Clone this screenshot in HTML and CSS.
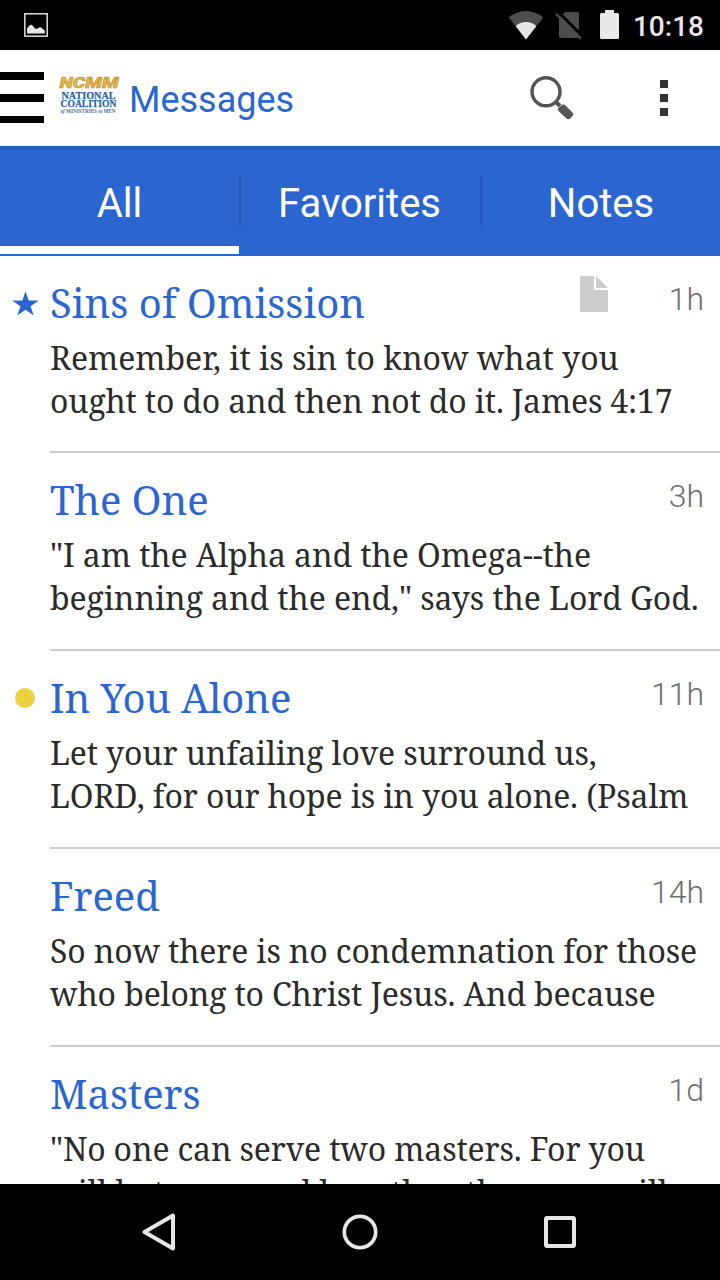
FILE: index.html
```
<!DOCTYPE html>
<html lang="en">
<head>
<meta charset="utf-8">
<title>Messages</title>
<link rel="stylesheet" href="styles.css">
</head>
<body>
<div class="screen">
  <div class="status">
    <svg class="status-pic" width="24" height="24" viewBox="0 0 24 24"><rect x=".8" y=".8" width="22.4" height="22.4" fill="none" stroke="#dcdcdc" stroke-width="1.5"/><path d="M3 20.500V15.500L5.500 12.600Q7.300 10.600 9 13L11.300 15.800H13L15 14.600Q16.500 13.600 18 15.200L20.800 17.400V20.500z" fill="#e6e6e6"/></svg>
    <div class="status-right">
      <svg width="36" height="30" viewBox="0 0 36 30"><path d="M18 29.500L.8 7.500Q8 1 18 1T35.200 7.500z" fill="#4d4d4d"/><path d="M18 29.500L7.800 16.200Q12 12 18 12T28.200 16.200z" fill="#e6e6e6"/></svg>
      <svg width="27" height="30" viewBox="0 0 27 30"><path d="M4 8L10.200 2H22Q24 2 24 4V26Q24 28 22 28H6Q4 28 4 26z" fill="#4d4d4d"/><path d="M2.500 1.200L27.500 26.200" stroke="#000" stroke-width="3"/><path d="M1 3.800L25.800 28.800" stroke="#4d4d4d" stroke-width="2.400"/></svg>
      <svg width="19" height="30" viewBox="0 0 19 30"><path d="M5 0H14V3H17.500Q19 3 19 4.500V27.500Q19 29 17.500 29H1.500Q0 29 0 27.500V4.500Q0 3 1.500 3H5z" fill="#e9e9e9"/></svg>
      <span class="clock">10:18</span>
    </div>
  </div>
  <header class="bar">
    <div class="burger"><i></i><i></i><i></i></div>
    <svg class="logo" width="62" height="40" viewBox="0 0 62 40">
      <text class="logo-top" x="1.500" y="11.500" textLength="59" lengthAdjust="spacingAndGlyphs">NCMM</text>
      <text class="logo-mid" x="3.500" y="22.500" textLength="54" lengthAdjust="spacingAndGlyphs">NATIONAL</text>
      <text class="logo-mid" x="2.500" y="31" textLength="56" lengthAdjust="spacingAndGlyphs">COALITION</text>
      <text class="logo-low" x="2.500" y="37" textLength="55" lengthAdjust="spacingAndGlyphs"><tspan font-style="italic">of</tspan> MINISTRIES <tspan font-style="italic">to</tspan> MEN</text>
    </svg>
    <h1>Messages</h1>
    <svg class="search" width="44" height="44" viewBox="0 0 44 44"><circle cx="16" cy="15.800" r="14" fill="none" stroke="#545454" stroke-width="3.400"/><path d="M25.500 25.500L30 30" stroke="#545454" stroke-width="4"/><path d="M28 32.500L32.500 28.500Q34 28 35.500 29.500L42.500 36.500Q44 38.500 42 40.500L40.500 42.200Q38.500 44 36.500 42.500L29.500 36Q27.500 34 28 32.500z" fill="#545454"/></svg>
    <div class="more"><i></i><i></i><i></i></div>
  </header>
  <nav class="tabs">
    <div class="tab on">All</div><div class="tab">Favorites</div><div class="tab notes">Notes</div>
  </nav>
  <main class="list">
    <article class="row">
      <div class="mark"><svg width="27" height="26" viewBox="0 0 26 26" preserveAspectRatio="none"><path d="M13 .3L16 9.500H25.800L17.900 15.200L20.900 24.500L13 18.800L5.100 24.500L8.100 15.200L.2 9.500H10z" fill="#2b66d0"/></svg></div>
      <div class="body">
        <div class="head"><h2>Sins of Omission</h2><svg class="note" width="28" height="36" viewBox="0 0 28 36"><path d="M1 0H14V14H28V35Q28 36 27 36H1Q0 36 0 35V1Q0 0 1 0z" fill="#ccc"/><path d="M16 0V12H28z" fill="#ccc"/></svg><time>1h</time></div>
        <p class="t1">Remember, it is sin to know what you</p>
        <p class="t5">ought to do and then not do it. James 4:17</p>
      </div>
    </article>
    <article class="row">
      <div class="mark"></div>
      <div class="body">
        <div class="head"><h2>The One</h2><time>3h</time></div>
        <p class="t2">"I am the Alpha and the Omega--the</p>
        <p class="t2">beginning and the end," says the Lord God.</p>
      </div>
    </article>
    <article class="row">
      <div class="mark"><span class="dot"></span></div>
      <div class="body">
        <div class="head"><h2 class="t3">In You Alone</h2><time>11h</time></div>
        <p class="t3">Let your unfailing love surround us,</p>
        <p class="t3">LORD, for our hope is in you alone. (Psalm</p>
      </div>
    </article>
    <article class="row">
      <div class="mark"></div>
      <div class="body">
        <div class="head"><h2>Freed</h2><time>14h</time></div>
        <p class="t4">So now there is no condemnation for those</p>
        <p class="t3">who belong to Christ Jesus. And because</p>
      </div>
    </article>
    <article class="row">
      <div class="mark"></div>
      <div class="body">
        <div class="head"><h2>Masters</h2><time>1d</time></div>
        <p class="t4">"No one can serve two masters. For you</p>
        <p class="t4">will hate one and love the other; you will</p>
      </div>
    </article>
  </main>
  <footer class="nav">
    <svg width="36" height="40" viewBox="0 0 36 40"><path d="M31 3.500V36.500L2.500 20z" fill="none" stroke="#e6e6e6" stroke-width="4" stroke-linejoin="round"/></svg>
    <svg width="36" height="36" viewBox="0 0 36 36"><circle cx="18" cy="18" r="15.700" fill="none" stroke="#e6e6e6" stroke-width="3.700"/></svg>
    <svg width="36" height="32" viewBox="-2 0 36 32"><rect x="2" y="2" width="28" height="28" rx="1" fill="none" stroke="#e6e6e6" stroke-width="4"/></svg>
  </footer>
</div>
</body>
</html>
```
FILE: styles.css
```
* { box-sizing: border-box; margin: 0; padding: 0; }
body { background: #fff; font-family: Roboto, "Liberation Sans", sans-serif; }
svg { display: block; flex: none; }
.screen { width: 720px; height: 1280px; display: flex; flex-direction: column; overflow: hidden; }

.status { height: 50px; flex: none; background: #000; display: flex; justify-content: space-between; align-items: flex-start; padding: 13px 16px 0 24px; }
.status-right { display: flex; align-items: flex-start; margin-top: -3px; }
.status-right svg:nth-child(2) { margin-left: 11px; }
.status-right svg:nth-child(3) { margin-left: 18px; }
.clock { margin-left: 14px; color: #e6e6e6; font-size: 28px; font-weight: 500; line-height: 34px; }

.bar { height: 96px; flex: none; display: flex; align-items: flex-start; background: #fff; }
.burger { width: 44px; margin-top: 22px; display: flex; flex-direction: column; gap: 14px; }
.burger i { height: 8px; background: #000; }
.burger i:last-child { height: 7px; }
.logo { margin: 26px 0 0 14px; overflow: visible; }
.logo-top { font: italic 900 14.500px Roboto, sans-serif; fill: #e5b546; stroke: #b98f3a; stroke-width: .5px; }
.logo-mid { font: bold 11px "Liberation Serif", serif; fill: #2f5f9e; stroke: #2f5f9e; stroke-width: .25px; }
.logo-low { font: bold 6px "Liberation Serif", serif; fill: #4a6f9e; }
h1 { margin: 28px 0 0 9px; font-weight: 400; font-size: 36px; line-height: 44px; color: #2b66d0; flex: 1; }
.search { margin-top: 26px; }
.more { width: 8px; margin: 30px 52px 0 86px; display: flex; flex-direction: column; gap: 6px; }
.more i { height: 8px; background: #333; }

.tabs { height: 110px; flex: none; display: grid; grid-template-columns: 239px 241px 240px; background: linear-gradient(#2558b4, #2b66d0 6px); }
.tab { position: relative; height: 108px; padding-top: 34px; text-align: center; color: #fff; font-size: 40px; line-height: 48px; }
.tab + .tab::before { content: ""; position: absolute; left: 0; top: 30px; width: 2px; height: 50px; background: #2459b5; }
.on { border-bottom: 8px solid #fff; }
.notes { padding-left: 2px; }

.list { flex: 1; min-height: 0; overflow: hidden; font-family: "Noto Serif", "DejaVu Serif", serif; }
.row { height: 198px; display: flex; }
.row:first-child { height: 197px; }
.mark { width: 50px; flex: none; padding-top: 35px; display: flex; justify-content: center; align-items: flex-start; }
.dot { width: 20px; height: 20px; margin-top: 2px; border-radius: 50%; background: #ecd143; }
.body { flex: 1; padding-top: 23px; border-bottom: 2px solid #ccc; }
.head { height: 48px; margin-bottom: 9px; padding-right: 16px; display: flex; align-items: flex-start; }
h2 { flex: 1; font-weight: 400; font-size: 40px; line-height: 48px; color: #2b66d0; }
.note { margin: -3px 61px 0 0; }
time { font: 300 32px/40px Roboto, sans-serif; color: #6e6e6e; }
p { font-size: 32px; line-height: 43px; color: #2b2b2b; white-space: nowrap; }
.t1 { letter-spacing: -.04px; }
.t2 { letter-spacing: -.09px; }
.t3 { letter-spacing: -.14px; }
.t4 { letter-spacing: -.16px; }
.t5 { letter-spacing: -.18px; }

.nav { height: 96px; flex: none; background: #000; display: flex; align-items: center; padding: 0 142px; justify-content: space-between; }
```
